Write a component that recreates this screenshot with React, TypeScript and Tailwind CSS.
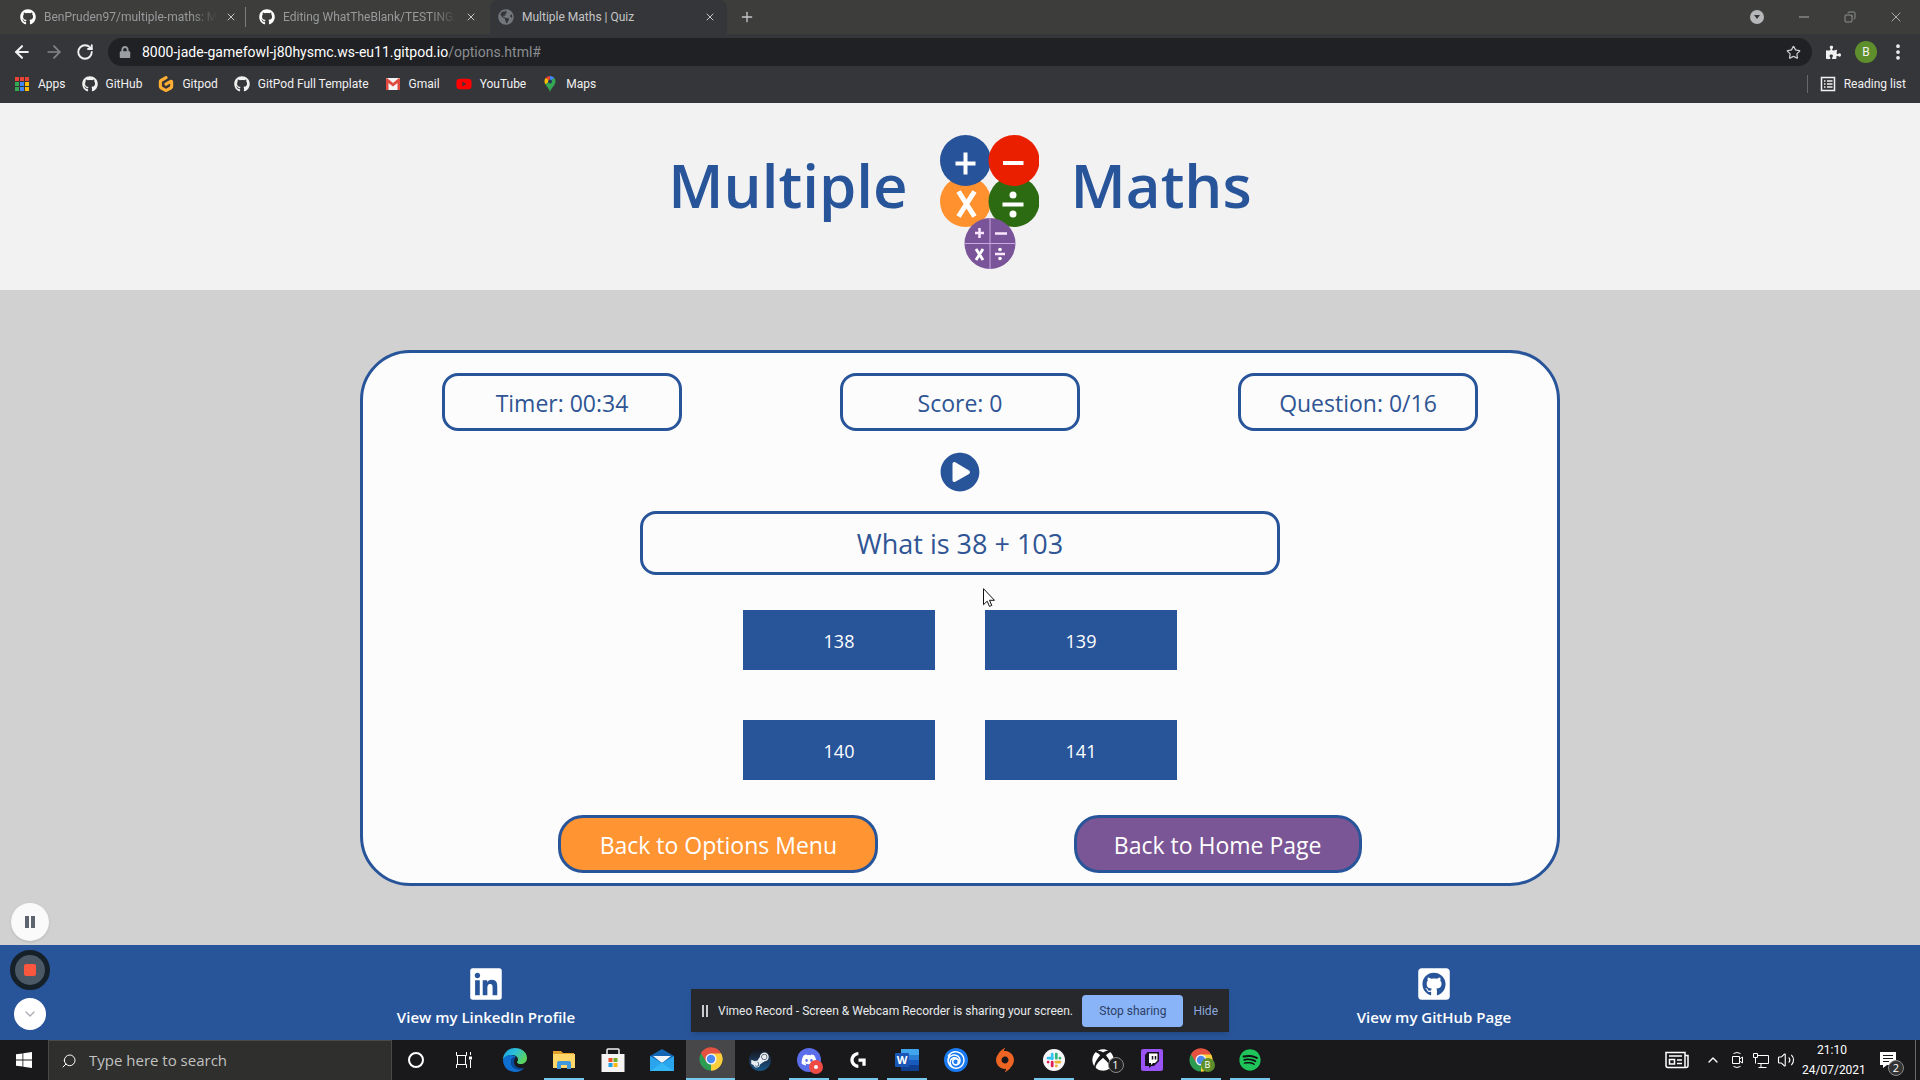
import type { ReactNode } from "react";
import {
  FaGithub, FaGithubSquare, FaLinkedin, FaPlayCircle, FaLock, FaPuzzlePiece, FaSteamSymbol,
  FaXbox, FaTwitch, FaSpotify, FaYoutube, FaGlobeAmericas, FaDiscord,
} from "react-icons/fa";
import { SiGitpod, SiOrigin, SiUbisoft, SiLogitechg } from "react-icons/si";
import {
  ArrowLeft, ArrowRight, ChevronDown, ChevronUp, Copy, Minus, MoreVertical,
  Plus, RotateCw, Search, Star, Volume2, X,
} from "lucide-react";

const tabs = [
  { title: "BenPruden97/multiple-maths: M", github: true, box: "w-[247px] border-r border-[#3d3e3c] pl-5 text-[#989a9c]" },
  { title: "Editing WhatTheBlank/TESTING.", github: true, box: "w-[243px] pl-3 text-[#989a9c]" },
  { title: "Multiple Maths | Quiz", github: false, box: "w-[237px] rounded-t-lg bg-[#35363a] pr-[11px] pl-2 text-[#c4c5c6]" },
];

function AppsIcon() {
  const colors = ["#ea4335", "#ea4335", "#ea4335", "#34a853", "#4285f4", "#fbbc04", "#34a853", "#4285f4", "#fbbc04"];
  return (
    <svg className="size-4" viewBox="0 0 16 16">
      {colors.map((c, i) => (
        <rect key={i} x={1 + (i % 3) * 5} y={1 + Math.floor(i / 3) * 5} width="4" height="4" fill={c} />
      ))}
    </svg>
  );
}

function GmailIcon() {
  return (
    <svg className="size-4" viewBox="0 0 16 16">
      <rect x="1" y="2" width="14" height="12" rx="1" fill="#f4f4f4" />
      <path d="M1 14V3l1-1 6 5 6-5 1 1v11h-2.500V7L8 10.500 3.500 7v7z" fill="#e04a3f" />
    </svg>
  );
}

function MapsIcon() {
  return (
    <svg className="size-4" viewBox="0 0 16 16">
      <path d="M8 0a5.500 5.500 0 0 0-4.300 2.100L8 6z" fill="#ea4335" />
      <path d="M8 0a5.500 5.500 0 0 1 4.300 2.100L8 6z" fill="#4285f4" />
      <path d="M3.700 2.100A5.500 5.500 0 0 0 3.500 8.500L8 5z" fill="#fbbc04" />
      <path d="M12.300 2.100c2 2.700 1.300 5.400-.3 7.400S8.800 13 8 16c-.6-2.500-2.500-4.800-4.500-7.500z" fill="#34a853" />
      <circle cx="8" cy="5.500" r="2" fill="#25355c" />
    </svg>
  );
}

const bookmarks: { label: string; icon: ReactNode }[] = [
  { label: "Apps", icon: <AppsIcon /> },
  { label: "GitHub", icon: <FaGithub className="size-4" /> },
  { label: "Gitpod", icon: <SiGitpod className="size-4 text-[#ffae33]" /> },
  { label: "GitPod Full Template", icon: <FaGithub className="size-4" /> },
  { label: "Gmail", icon: <GmailIcon /> },
  { label: "YouTube", icon: <FaYoutube className="size-4 text-[#ff0000]" /> },
  { label: "Maps", icon: <MapsIcon /> },
];

function BrowserChrome() {
  return (
    <div className="bg-[#35363a] font-[Roboto,sans-serif] text-[#f1f1f1]">
      <div className="flex h-[34px] items-center bg-[#3d3e3c]">
        <div className="flex h-full" role="tablist">
          {tabs.map((t, i) => (
            <div key={t.title} className={"flex h-full items-center gap-2 " + t.box}>
              {t.github ? (
                <FaGithub className="size-4 shrink-0 text-white" />
              ) : (
                <FaGlobeAmericas className="size-4 shrink-0 text-[#73777b]" />
              )}
              <button
                role="tab"
                aria-selected={i === 2}
                className={
                  i === 2
                    ? "flex-1 text-left text-[12px] whitespace-nowrap"
                    : "w-[174px] mask-r-from-85% text-left text-[12px] whitespace-nowrap"
                }
              >
                {t.title}
              </button>
              <button aria-label={"Close " + t.title} className="text-[#c4c5c6]">
                <X className="size-3" />
              </button>
              {i === 0 && <span className="h-5 w-px bg-[#7b7d80]" />}
            </div>
          ))}
        </div>
        <button aria-label="New tab" className="ml-3 text-[#c4c5c6]">
          <Plus className="size-4" />
        </button>
        <div className="ml-auto flex items-center gap-8 pr-4 text-[#a9abad]">
          <button aria-label="Search tabs" className="flex size-[14px] items-center justify-center rounded-full bg-[#b5b7b9]">
            <svg className="size-2" viewBox="0 0 8 8"><path d="M1 2h6L4 6z" fill="#35363a" /></svg>
          </button>
          <button aria-label="Minimise"><Minus className="size-4" strokeWidth={1.500} /></button>
          <button aria-label="Restore"><Copy className="size-3 rotate-90" strokeWidth={1.500} /></button>
          <button aria-label="Close window"><X className="size-4" strokeWidth={1.500} /></button>
        </div>
      </div>

      <div className="flex h-9 items-center pr-3 pl-3">
        <div className="flex w-24 items-center gap-3">
          <button aria-label="Back"><ArrowLeft className="size-5" strokeWidth={2.500} /></button>
          <button aria-label="Forward" className="text-[#84868a]"><ArrowRight className="size-5" strokeWidth={2} /></button>
          <button aria-label="Reload"><RotateCw className="size-[18px]" strokeWidth={2.500} /></button>
        </div>
        <div className="flex h-7 flex-1 items-center rounded-full bg-[#202124] px-[11px]">
          <FaLock className="size-3 text-[#9a9da1]" />
          <button className="ml-[11px] flex-1 text-left text-[14px] text-white">
            8000-jade-gamefowl-j80hysmc.ws-eu11.gitpod.io<span className="text-[#8a8d91]">/options.html#</span>
          </button>
          <button aria-label="Bookmark this page"><Star className="size-[15px] text-[#c9cbcd]" /></button>
        </div>
        <button aria-label="Extensions" className="ml-[14px]"><FaPuzzlePiece className="size-[15px]" /></button>
        <button aria-label="Profile" className="ml-[14px] flex size-[22px] items-center justify-center rounded-full bg-[#5f8f2c] text-[12px]">B</button>
        <button aria-label="Menu" className="ml-[11px]"><MoreVertical className="size-5" strokeWidth={2.500} /></button>
      </div>

      <nav className="flex h-[33px] items-center pb-[5px] pl-[14px] text-[12px]">
        <div className="flex items-center gap-4">
          {bookmarks.map((b) => (
            <a key={b.label} href="#" className="flex items-center gap-2 whitespace-nowrap">
              {b.icon}
              {b.label}
            </a>
          ))}
        </div>
        <button className="ml-auto flex items-center gap-2 border-l border-[#66686c] pr-[14px] pl-3">
          <svg className="size-4" viewBox="0 0 16 16" fill="none" stroke="#f1f1f1">
            <path d="M1.500 1.500h13v13h-13z" strokeWidth="1.500" />
            <path d="M4 5h1.500M7 5h5.500M4 8h1.500M7 8h5.500M4 11h1.500M7 11h5.500" strokeWidth="1.500" />
          </svg>
          Reading list
        </button>
      </nav>
    </div>
  );
}

function Logo() {
  return (
    <svg className="h-[134px] w-[99px]" viewBox="0 0 99 134" role="img" aria-label="Maths operators">
      <circle cx="25.500" cy="66.500" r="25.500" fill="#ff912f" />
      <circle cx="74" cy="66.500" r="25.500" fill="#2c6b12" />
      <circle cx="25.500" cy="25.500" r="25.500" fill="#27539a" />
      <circle cx="74" cy="25.500" r="25.500" fill="#ea1f00" />
      <circle cx="50" cy="108.500" r="25.500" fill="#7a5499" />
      <g stroke="#fff" strokeWidth="4" fill="none">
        <path d="M15.500 28.500h20M25.500 17.500v22M63 28h20.500M62.500 69.500h21" />
        <path d="M18.500 56.500l16 25M34.500 56.500l-16 25" strokeWidth="5" />
        <path d="M50 83v51M24.500 108.500h51" strokeWidth="1" stroke="#c9a9e0" />
        <path d="M35 98h9M39.500 93v10M55 98.500h12M55 119h10" strokeWidth="2.500" stroke="#fbe6ff" />
        <path d="M36 114l7 11M43 114l-7 11" strokeWidth="2.800" />
      </g>
      <g fill="#fff">
        <circle cx="73" cy="60" r="3.500" />
        <circle cx="73" cy="79" r="3.500" />
        <circle cx="60" cy="114.500" r="1.800" />
        <circle cx="60" cy="123.500" r="1.800" />
      </g>
    </svg>
  );
}

const stat = "flex h-[58px] w-60 items-center justify-center rounded-2xl border-3 border-[#28559a] pt-1 text-[23px]";

function Quiz() {
  return (
    <section className="w-5/8 rounded-[50px] border-3 border-[#28559a] bg-[#fcfcfc] pt-5 pb-[10px] text-[#2f5594]">
      <div className="grid grid-cols-3 justify-items-center">
        <div className={stat}>Timer: 00:34</div>
        <div className={stat}>Score: 0</div>
        <div className={stat}>Question: 0/16</div>
      </div>
      <button aria-label="Play" className="mx-auto mt-[21px] block text-[#28559a]">
        <FaPlayCircle className="size-10" />
      </button>
      <h2 className="mx-auto mt-[19px] flex h-16 w-[640px] items-center justify-center rounded-2xl border-3 border-[#28559a] pt-1 text-[27px]">
        What is 38 + 103
      </h2>
      <div className="mx-auto mt-[35px] grid w-fit grid-cols-2 gap-[50px]">
        {["138", "139", "140", "141"].map((a) => (
          <button key={a} className="h-[60px] w-48 bg-[#28559a] pt-1 text-[18px] text-white">{a}</button>
        ))}
      </div>
      <div className="mt-[35px] flex justify-evenly text-[23px] text-white">
        <button className="h-[58px] w-80 rounded-[25px] border-3 border-[#28559a] bg-[#ff9433] pt-1">Back to Options Menu</button>
        <button className="h-[58px] w-72 rounded-[25px] border-3 border-[#28559a] bg-[#7b5696] pt-1">Back to Home Page</button>
      </div>
    </section>
  );
}

function EdgeIcon() {
  return (
    <svg className="size-6" viewBox="0 0 24 24">
      <defs>
        <linearGradient id="edge-top" x1="0" x2="1" y1="0" y2="0.500">
          <stop offset="0" stopColor="#1a9fe0" />
          <stop offset="0.500" stopColor="#2bc0d8" />
          <stop offset="1" stopColor="#5bd45e" />
        </linearGradient>
      </defs>
      <path d="M0 12C0 5 5.500 0 12 0c7 0 12 4.500 12 10 0 3.500-2.500 6-6 6-2.500 0-4-.9-4-1.800 0-.8 1-1 1-2.700C15 9 12.500 7 9 7c-4.500 0-8 2-9 5z" fill="url(#edge-top)" />
      <path d="M0 12c1-3.500 4.500-5 8-5 2 0 4 .8 5 2-3-.5-5 2-5 5 0 4.500 4 7.500 8 7.500 2 0 4-.7 5.500-1.800C19 22.500 16 24 12 24 5 24 0 18.500 0 12z" fill="#0f6fd0" />
      <path d="M8 14c0 4.500 4 7.500 8 7.500 2 0 4-.7 5.500-1.800-4.500 1.300-10-.2-10.500-5.200-.2-2.500 1-4.500 2-5.500-3-.5-5 2-5 5z" fill="#0a4a9c" />
    </svg>
  );
}

function FolderIcon() {
  return (
    <svg className="size-6" viewBox="0 0 24 24">
      <path d="M1 3h8l2 2h11v4H1z" fill="#e0a12a" />
      <path d="M1 6h22v14H1z" fill="#ffd768" />
      <path d="M5 21v-6q0-2 2-2h10q2 0 2 2v6h-4v-4H9v4z" fill="#3f97dc" />
    </svg>
  );
}

function StoreIcon() {
  return (
    <svg className="size-6" viewBox="0 0 24 24">
      <path d="M6 7V2q0-1 1-1h10q1 0 1 1v5" fill="none" stroke="#f3f3f3" strokeWidth="1.500" />
      <path d="M.5 6h23v18H.5z" fill="#f5f3f3" />
      <path d="M7.500 10h4v4h-4z" fill="#f05024" />
      <path d="M12.500 10h4v4h-4z" fill="#6fae2a" />
      <path d="M7.500 15h4v4h-4z" fill="#1fa2e8" />
      <path d="M12.500 15h4v4h-4z" fill="#fbb80f" />
    </svg>
  );
}

function MailIcon() {
  return (
    <svg className="size-6" viewBox="0 0 24 24">
      <path d="M0 8l12-7 12 7v6H0z" fill="#1266b4" />
      <path d="M3 8h18l-9 7z" fill="#f1f6fa" />
      <path d="M0 8l12 7 12-7v15H0z" fill="#2aa4ec" />
      <path d="M0 23l12-8 12 8z" fill="#36b7f5" />
    </svg>
  );
}

function ChromeIcon() {
  return (
    <svg className="size-6" viewBox="0 0 24 24">
      <path d="M12 12L2.040 6.250A11.500 11.500 0 0 1 21.960 6.250z" fill="#e5523f" />
      <path d="M12 12L21.960 6.250A11.500 11.500 0 0 1 12 23.500z" fill="#fbcf3c" />
      <path d="M12 12v11.500A11.500 11.500 0 0 1 2.040 6.250z" fill="#2c9c51" />
      <path d="M12 6.500h9.960a11.500 11.500 0 0 0-19.920-.25L7 14.500z" fill="#e5523f" />
      <path d="M16.800 14.800L12 23.500A11.500 11.500 0 0 0 21.960 6.500H12z" fill="#fbcf3c" />
      <circle cx="12" cy="12" r="5.500" fill="#f5f5f5" />
      <circle cx="12" cy="12" r="4.200" fill="#4a8af0" />
    </svg>
  );
}

function SlackIcon() {
  return (
    <svg className="size-[22px]" viewBox="0 0 24 24">
      <circle cx="12" cy="12" r="12" fill="#f8f6f8" />
      <g strokeWidth="3" strokeLinecap="round">
        <path d="M10 5.500v5" stroke="#36c5f0" />
        <path d="M5.500 10H10" stroke="#36c5f0" />
        <path d="M14.500 5.500V10M18.500 10h-.1" stroke="#2eb67d" />
        <path d="M14 14.300h4.500M14.500 18.500v-.1" stroke="#ecb22e" />
        <path d="M10 14.300v4.200M5.500 14.300h.1" stroke="#e01e5a" />
      </g>
    </svg>
  );
}

function WordIcon() {
  return (
    <svg className="size-6" viewBox="0 0 24 24">
      <path d="M6 1h17q1 0 1 1v5H6z" fill="#41a5ee" />
      <path d="M6 7h18v5H6z" fill="#2b7cd3" />
      <path d="M6 12h18v5H6z" fill="#185abd" />
      <path d="M6 17h18v5q0 1-1 1H6z" fill="#103f91" />
      <rect x="0" y="5" width="14" height="14" rx="1" fill="#1a56b5" />
      <text x="7" y="16" fontSize="11" fontWeight="700" textAnchor="middle" fill="#fff">W</text>
    </svg>
  );
}

function DiscordIcon() {
  return (
    <span className="relative flex size-6 items-center justify-center rounded-full bg-[#5b6eea] text-white">
      <FaDiscord className="size-4" />
      <span className="absolute top-3 left-3 flex size-[14px] items-center justify-center rounded-full bg-[#ee4b45]">
        <span className="size-1 rounded-full bg-white" />
      </span>
    </span>
  );
}

const taskApps: { name: string; icon: ReactNode; open?: boolean; active?: boolean }[] = [
  { name: "Edge", icon: <EdgeIcon /> },
  { name: "File Explorer", icon: <FolderIcon />, open: true },
  { name: "Store", icon: <StoreIcon /> },
  { name: "Mail", icon: <MailIcon /> },
  { name: "Chrome", icon: <ChromeIcon />, active: true },
  {
    name: "Steam",
    icon: (
      <span className="flex size-[22px] items-center justify-center rounded-full bg-linear-to-b from-[#14161f] to-[#15568a]">
        <FaSteamSymbol className="size-5 text-[#e9eef2]" />
      </span>
    ),
  },
  { name: "Discord", icon: <DiscordIcon />, open: true },
  { name: "Logitech G", icon: <SiLogitechg className="size-4" />, open: true },
  { name: "Word", icon: <WordIcon />, open: true },
  {
    name: "Ubisoft",
    icon: (
      <span className="flex size-6 items-center justify-center rounded-full bg-[#1a7af0]">
        <SiUbisoft className="size-[18px]" />
      </span>
    ),
  },
  { name: "Origin", icon: <SiOrigin className="size-6 text-[#ee6422]" /> },
  { name: "Slack", icon: <SlackIcon />, open: true },
  {
    name: "Xbox",
    icon: (
      <span className="relative">
        <FaXbox className="size-[22px]" />
        <span className="absolute top-2 left-4 flex size-4 items-center justify-center rounded-full border border-[#8a8a8a] bg-[#222] text-[11px]">1</span>
      </span>
    ),
  },
  {
    name: "Twitch",
    icon: (
      <span className="flex size-[22px] items-center justify-center rounded-xs bg-[#9a54f5]">
        <svg className="size-4" viewBox="0 0 16 16">
          <path d="M3.500 0H15v9l-5 5H7.500L5 16v-2H1V3z" fill="#17111f" />
          <path d="M5 1.500h8.500v7L11 11H9l-2 2v-2H5z" fill="#fff" />
          <path d="M8.500 4v3.500M11.500 4v3.500" stroke="#17111f" strokeWidth="1.500" />
        </svg>
      </span>
    ),
  },
  {
    name: "Chrome profile B",
    icon: (
      <span className="relative">
        <ChromeIcon />
        <span className="absolute top-[10px] left-3 flex size-[14px] items-center justify-center rounded-full bg-[#5f8f2c] text-[9px]">B</span>
      </span>
    ),
    open: true,
  },
  {
    name: "Spotify",
    icon: (
      <span className="rounded-full bg-[#101010]">
        <FaSpotify className="size-[22px] text-[#1fc45a]" />
      </span>
    ),
    open: true,
  },
];

function Taskbar() {
  return (
    <div className="flex h-10 items-center bg-[#19191c] text-white">
      <button aria-label="Start" className="flex h-full w-12 items-center justify-center">
        <svg className="size-4" viewBox="0 0 16 16" fill="#fff">
          <path d="M0 2.300L6.500 1.400v6.200H0zM7.300 1.300L16 0v7.600H7.300zM0 8.400h6.500v6.200L0 13.700zM7.300 8.400H16V16l-8.700-1.300z" />
        </svg>
      </button>
      <label className="flex h-full w-[344px] items-center gap-3 border border-b-0 border-[#4a4a48] bg-[#2f2f2d] px-3">
        <Search className="size-4 -scale-x-100" strokeWidth={1.500} />
        <input aria-label="Search" placeholder="Type here to search" className="flex-1 bg-transparent text-[15px] outline-none placeholder:text-[#c2c2c2]" />
      </label>
      <button aria-label="Cortana" className="flex h-full w-12 items-center justify-center">
        <span className="size-4 rounded-full border-2 border-white" />
      </button>
      <button aria-label="Task view" className="mr-[2px] flex h-full w-12 items-center justify-center">
        <svg className="size-4" viewBox="0 0 16 16" fill="none" stroke="#fff">
          <path d="M.5 0v3.500h10V0M.5 16v-3.500h10V16M1.500 4v8M9.500 4v8M14.500 0v3M14.500 8v8" />
          <path d="M13 4.500h3v3h-3z" fill="#fff" stroke="none" />
        </svg>
      </button>
      {taskApps.map((a) => (
        <button
          key={a.name}
          aria-label={a.name}
          className={
            a.active
              ? "flex h-full w-[49px] items-center justify-center border-b-2 border-[#76c8ee] bg-[#47474a]"
              : "flex h-full w-[49px] flex-col items-center justify-center"
          }
        >
          <span className={a.active ? "flex items-center" : "mt-auto mb-auto flex items-center pt-[2px]"}>{a.icon}</span>
          {!a.active && <span className={a.open ? "h-[2px] w-10 bg-[#76c8ee]" : "h-[2px] w-10"} />}
        </button>
      ))}
      <div className="ml-auto flex h-full items-center">
        <button aria-label="News" className="mr-4">
          <svg className="size-6" viewBox="0 0 24 24" fill="none" stroke="#fff" strokeWidth="1.500">
            <path d="M1 4.500h19v15H3q-2 0-2-2zM20 7.500h3v10q0 2-2 2h-2M4 8h13M4.500 11.500h5v4.500h-5zM12 12h5M12 15.500h5" />
          </svg>
        </button>
        <div className="flex items-center gap-2">
          <button aria-label="Show hidden icons"><ChevronUp className="size-4" strokeWidth={2} /></button>
          <button aria-label="Meet now">
            <svg className="size-4" viewBox="0 0 16 16" fill="none" stroke="#fff">
              <path d="M4.500 1.500q3.500-2 7 0M4.500 14.500q3.500 2 7 0M3.500 4.500h7v7h-7zM10.500 7l3-2v6l-3-2" />
            </svg>
          </button>
          <button aria-label="Network">
            <svg className="size-4" viewBox="0 0 16 16" fill="none" stroke="#fff">
              <path d="M4.500 3.500h11v8h-11M8 12v3M5.500 15.500h8M.5 1.500h4v4h-4zM2.500 5.500v6" />
            </svg>
          </button>
          <button aria-label="Volume"><Volume2 className="size-[18px]" strokeWidth={1.500} /></button>
        </div>
        <button className="ml-[7px] w-[60px] text-center font-[Roboto,sans-serif] text-[12px] leading-[20px]">
          <span className="block">21:10</span>
          <span className="block">24/07/2021</span>
        </button>
        <button aria-label="Notifications" className="relative mr-[19px] ml-[18px]">
          <svg className="size-4" viewBox="0 0 16 16">
            <path d="M0 0h16v13H7l-4 3v-3H0z" fill="#fff" />
            <path d="M3 3.500h10M3 6.500h10M3 9.500h6" stroke="#19191c" />
          </svg>
          <span className="absolute top-2 left-2 flex size-4 items-center justify-center rounded-full border border-[#8a8a8a] bg-[#333] text-[11px]">2</span>
        </button>
        <span className="mr-1 h-full w-px bg-[#6a6a6a]" />
      </div>
    </div>
  );
}

export default function App() {
  return (
    <div className="relative flex min-h-screen flex-col font-['Open_Sans',sans-serif]">
      <BrowserChrome />
      <header className="flex h-[187px] items-center justify-center gap-8 bg-[#f2f2f2] pt-[10px] text-[60px] font-semibold text-[#28559a]">
        <span className="pb-[34px]">Multiple</span>
        <Logo />
        <span className="pb-[34px]">Maths</span>
      </header>
      <main className="flex flex-1 items-center justify-center bg-[#d1d1d1] text-center">
        <Quiz />
      </main>
      <footer className="grid h-[95px] grid-cols-2 items-center bg-[#28559a] px-3 pt-[10px] text-[15px] font-semibold text-white">
        <a href="#" className="mx-auto flex flex-col items-center gap-1">
          <FaLinkedin className="size-9" />
          View my LinkedIn Profile
        </a>
        <a href="#" className="mx-auto flex flex-col items-center gap-1">
          <FaGithubSquare className="size-9" />
          View my GitHub Page
        </a>
      </footer>
      <Taskbar />

      <div className="absolute bottom-[50px] left-[10px] flex flex-col items-center">
        <button aria-label="Pause recording" className="flex size-[38px] items-center justify-center gap-[2px] rounded-full bg-[#fafafa] shadow">
          <span className="h-3 w-1 bg-[#5d6470]" />
          <span className="h-3 w-1 bg-[#5d6470]" />
        </button>
        <button aria-label="Stop recording" className="mt-[9px] flex size-10 items-center justify-center rounded-full border-5 border-[#162028] bg-[#4b5865]">
          <span className="size-3 rounded-xs bg-[#fb573f]" />
        </button>
        <button aria-label="Collapse recorder" className="mt-2 flex size-8 items-center justify-center rounded-full bg-white text-[#a9adb3]">
          <ChevronDown className="size-4" />
        </button>
      </div>

      <div className="absolute bottom-12 left-1/2 flex h-[43px] w-[538px] -translate-x-1/2 items-center bg-[#26282b] pl-[11px] font-[Roboto,sans-serif] text-[12px] whitespace-nowrap text-[#e8eaed] shadow-md">
        <span className="h-3 w-[6px] border-x-2 border-[#c9cbcd]" />
        <span className="ml-[10px]">Vimeo Record - Screen &amp; Webcam Recorder is sharing your screen.</span>
        <button className="ml-auto h-8 w-[101px] rounded-sm bg-[#8ab4f8] text-[#2b3f66]">Stop sharing</button>
        <button className="mr-[11px] ml-[10px] text-[#8da6dc]">Hide</button>
      </div>

      <svg className="absolute top-[588px] left-[983px] h-[19px] w-3" viewBox="0 0 12 19">
        <path d="M.5.700v16l3.700-3.500 2.300 5.200 2.300-1-2.300-5.100h5z" fill="#fff" stroke="#111" />
      </svg>
    </div>
  );
}
